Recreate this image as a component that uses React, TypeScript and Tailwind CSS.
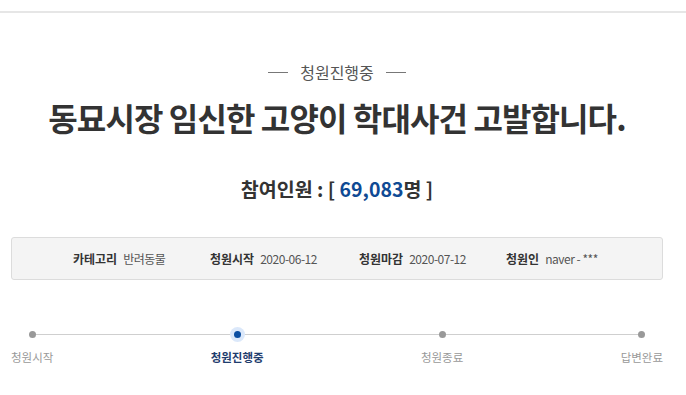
import React from 'react';

type Step = {
  label: string;
  active?: boolean;
};

const steps: Step[] = [
  { label: '청원시작' },
  { label: '청원진행중', active: true },
  { label: '청원종료' },
  { label: '답변완료' },
];

const InfoItem: React.FC<{ title: string; value: string }> = ({ title, value }) => (
  <div className="flex items-center gap-[6px]">
    <span className="font-bold text-[#333]">{title}</span>
    <span className="text-[#555] tracking-[-0.04em]">{value}</span>
  </div>
);

const App: React.FC = () => {
  return (
    <div
      className="w-[686px] h-[395px] bg-white overflow-hidden"
      style={{ fontFamily: '"Noto Sans CJK KR", "Noto Sans", sans-serif' }}
    >
      <div className="h-[13px] border-b-2 border-[#e6e6e6]"></div>

      <div className="w-[674px]">
        {/* status */}
        <div className="mt-[48px] flex items-center justify-center gap-[12px]">
          <span className="w-[20px] h-px bg-[#777]"></span>
          <span className="text-[16px] leading-[22px] text-[#555]">청원진행중</span>
          <span className="w-[20px] h-px bg-[#777]"></span>
        </div>

        {/* title */}
        <h1 className="mt-[14px] text-center text-[32px] leading-[40px] font-bold text-[#333] tracking-[-0.028em]">
          동묘시장 임신한 고양이 학대사건 고발합니다.
        </h1>

        {/* count */}
        <div className="mt-[40px] text-center text-[19.5px] leading-[24px] font-bold text-[#333]">
          참여인원 : [ <span className="text-[#0f4a94]">69,083</span>명 ]
        </div>

        {/* info box */}
        <div className="mx-[11px] mt-[36px] h-[43px] rounded-[3px] border border-[#dcdcdc] bg-[#f4f4f4] flex items-center pl-[61px] text-[12px]">
          <div className="w-[137px]">
            <InfoItem title="카테고리" value="반려동물" />
          </div>
          <div className="w-[149px]">
            <InfoItem title="청원시작" value="2020-06-12" />
          </div>
          <div className="w-[147px]">
            <InfoItem title="청원마감" value="2020-07-12" />
          </div>
          <InfoItem title="청원인" value="naver - ***" />
        </div>

        {/* progress */}
        <div className="relative mx-[11px] mt-[47px]">
          <div className="absolute left-[21px] right-[21px] top-[7px] h-px bg-[#cfcfcf]"></div>
          <div className="relative flex justify-between">
            {steps.map((s) => (
              <div key={s.label} className="flex flex-col items-center">
                <div className="w-[15px] h-[15px] flex items-center justify-center">
                  {s.active ? (
                    <div className="w-[15px] h-[15px] rounded-full bg-[#dbe8fa] flex items-center justify-center">
                      <div className="w-[7px] h-[7px] rounded-full bg-[#0b4ea2]"></div>
                    </div>
                  ) : (
                    <div className="w-[7px] h-[7px] rounded-full bg-[#999]"></div>
                  )}
                </div>
                <span
                  className={
                    s.active
                      ? 'mt-[7px] text-[11.5px] leading-[16px] font-bold text-[#1f3d6e]'
                      : 'mt-[7px] text-[11.5px] leading-[16px] text-[#999]'
                  }
                >
                  {s.label}
                </span>
              </div>
            ))}
          </div>
        </div>
      </div>
    </div>
  );
};

export default App;
